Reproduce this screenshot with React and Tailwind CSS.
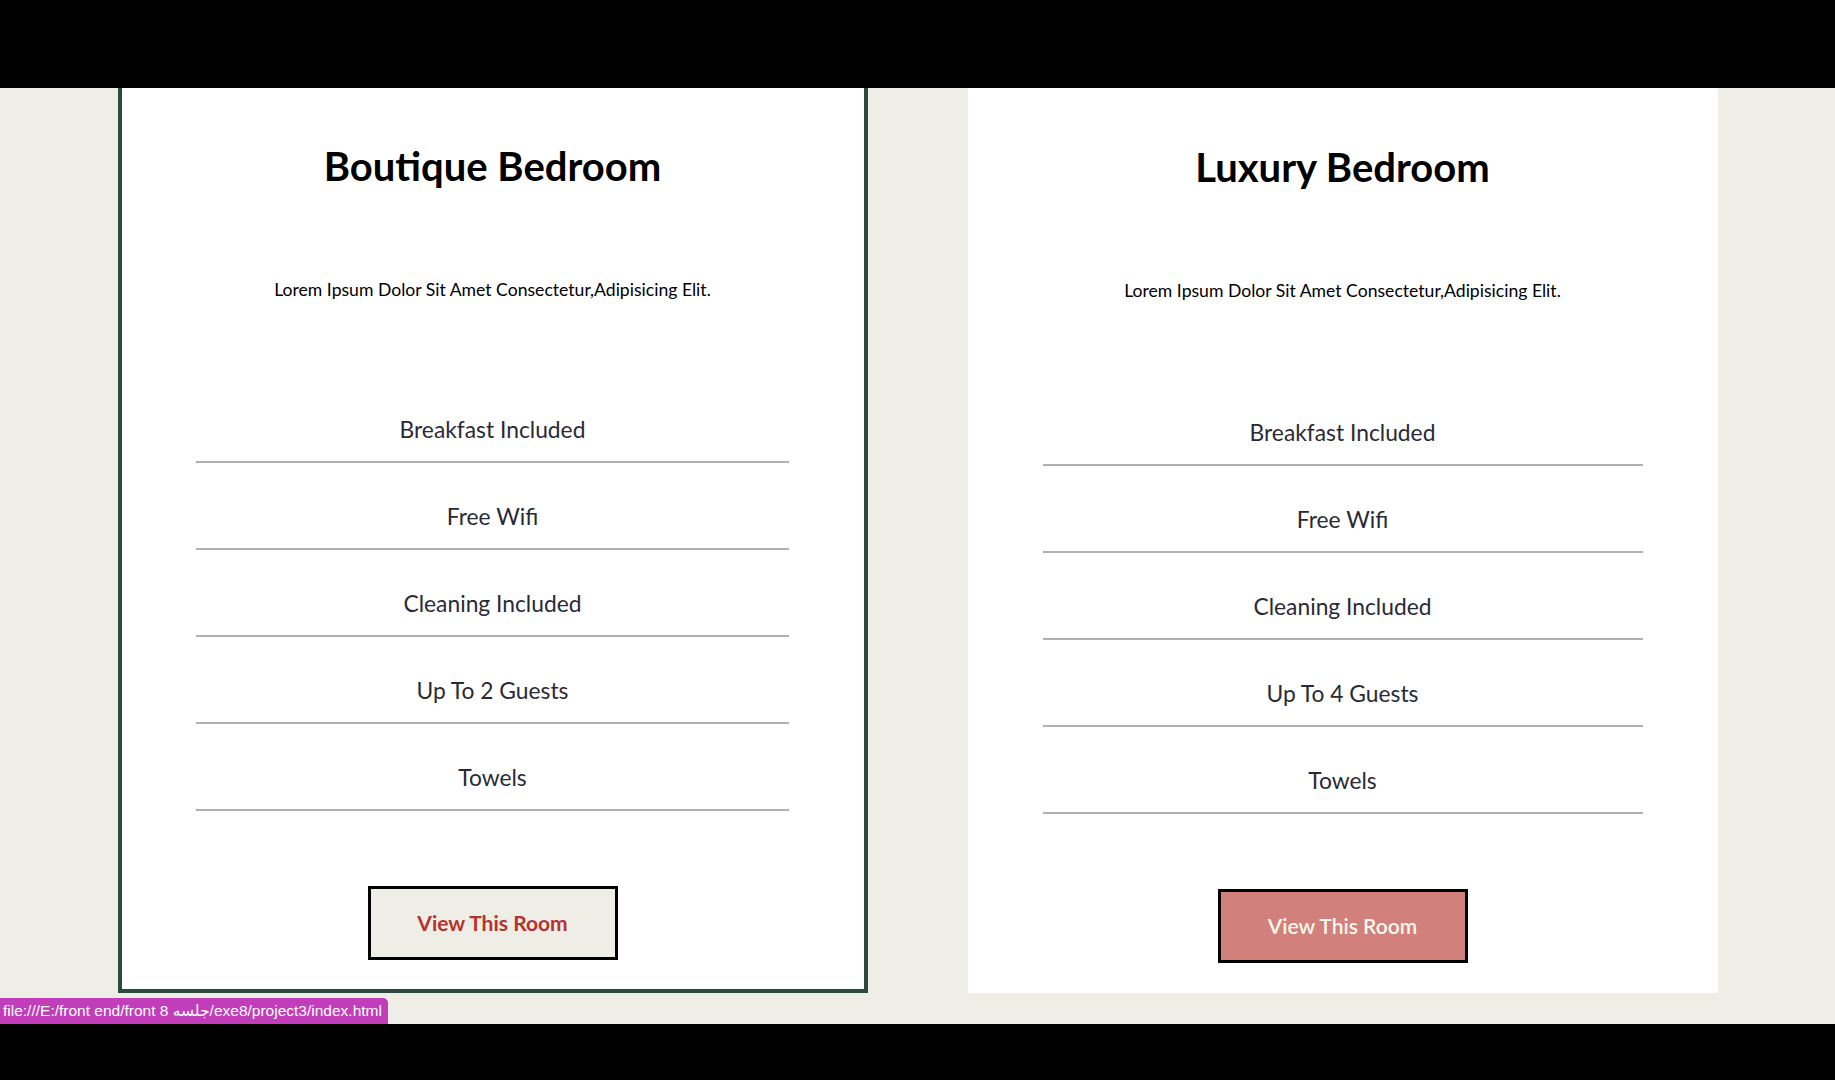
import React from "react";

const features = (guests) => [
  "Breakfast Included",
  "Free Wifi",
  "Cleaning Included",
  `Up To ${guests} Guests`,
  "Towels",
];

function Card({ title, guests, bordered }) {
  return (
    <div
      className={
        "w-[750px] h-[905px] bg-white flex flex-col items-center " +
        (bordered ? "border-x-4 border-b-4 border-[#2b4a3e] pt-[56px]" : "pt-[57px]")
      }
    >
      <h2
        className="text-[40px] leading-[44px] font-bold text-black"
        style={{ fontFamily: "Lato, 'Open Sans', sans-serif" }}
      >
        {title}
      </h2>
      <p
        className={
          "text-[17.6px] leading-[24px] text-black " + (bordered ? "mt-[90px]" : "mt-[90px]")
        }
        style={{ fontFamily: "Lato, 'Open Sans', sans-serif" }}
      >
        Lorem Ipsum Dolor Sit Amet Consectetur,Adipisicing Elit.
      </p>
      <ul className={"w-[80%] " + (bordered ? "mt-[74px]" : "mt-[76px]")}>
        {features(guests).map((f) => (
          <li
            key={f}
            className="pt-[41px] pb-[20px] border-b-2 border-[#b0b0b0] text-center text-[22.8px] leading-[24px] text-[#2a2a35]"
            style={{ fontFamily: "Lato, 'Open Sans', sans-serif" }}
          >
            {f}
          </li>
        ))}
      </ul>
      <button
        className={
          "mt-[75px] w-[250px] h-[74px] border-[3px] border-black text-[21px] " +
          (bordered
            ? "bg-[#eeede6] text-[#b5332e] font-bold"
            : "bg-[#d2807b] text-[#fff8ee] font-semibold")
        }
        style={{ fontFamily: "Lato, 'Open Sans', sans-serif" }}
      >
        View This Room
      </button>
    </div>
  );
}

export default function App() {
  return (
    <div className="w-[1835px] h-[1080px] flex flex-col bg-black overflow-hidden">
      <div className="h-[88px] shrink-0 bg-black" />
      <div className="relative h-[936px] shrink-0 bg-[#eeede6] flex justify-center items-start gap-[100px]">
        <Card title="Boutique Bedroom" guests={2} bordered />
        <Card title="Luxury Bedroom" guests={4} />
        <div
          className="absolute left-0 bottom-0 h-[26px] pl-[3px] pr-[6px] bg-[#c23db9] text-white text-[15.5px] leading-[26px] rounded-tr-[5px] whitespace-nowrap"
          style={{ fontFamily: "'Liberation Sans', 'DejaVu Sans', sans-serif" }}
        >
          file:///E:/front end/front 8 جلسه/exe8/project3/index.html
        </div>
      </div>
      <div className="flex-1 bg-black" />
    </div>
  );
}
